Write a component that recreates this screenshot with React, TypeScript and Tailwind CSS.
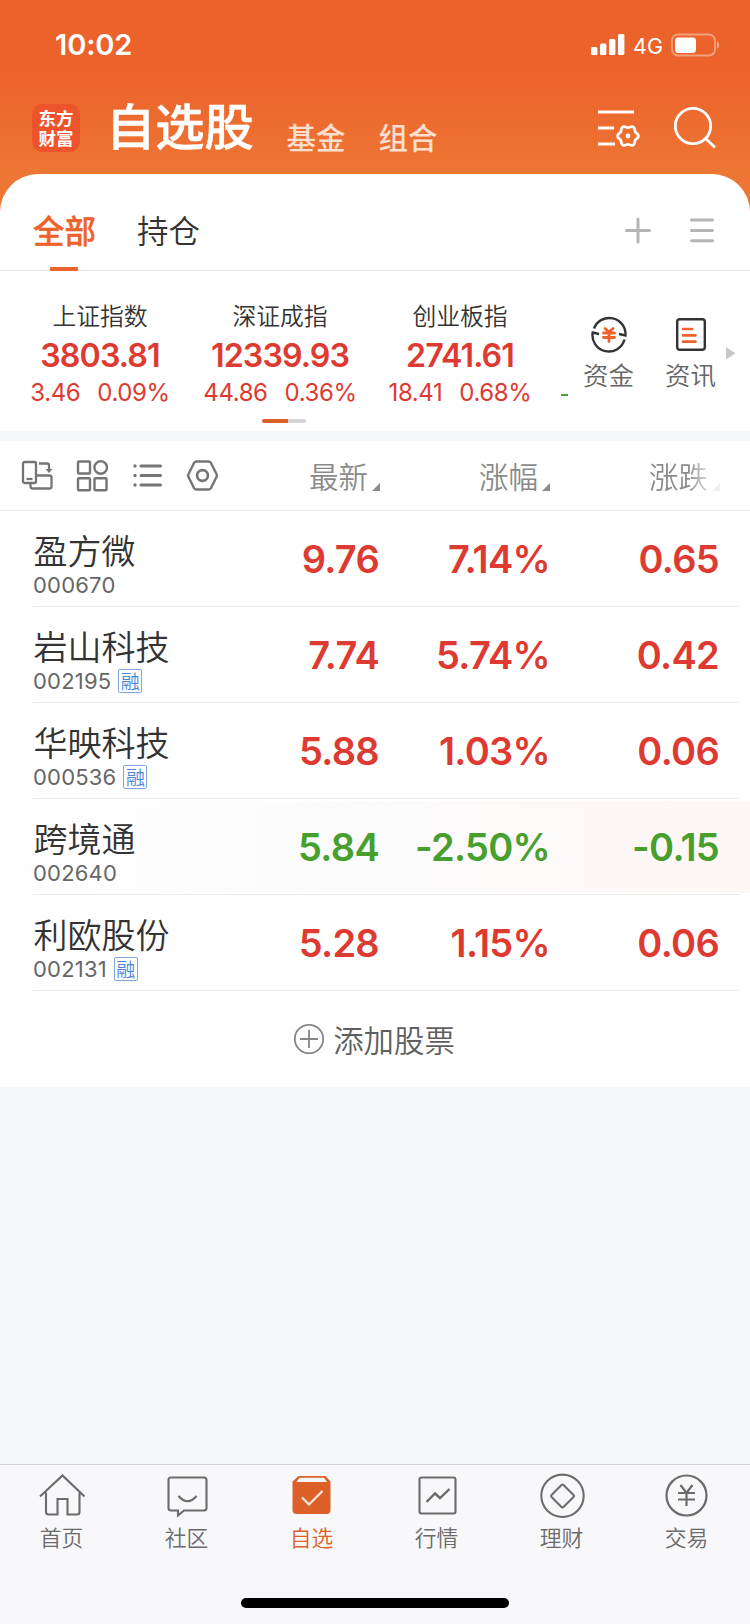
import type { ReactNode } from 'react'
import { clsx } from 'clsx'

const CJK = "font-['Noto_Sans_CJK_SC','Noto_Sans',sans-serif]"
const NUM = "font-['Inter','Noto_Sans_CJK_SC',sans-serif]"

interface IndexQuote {
  name: string
  value: string
  change: string
  percent: string
}

interface Stock {
  name: string
  code: string
  margin?: boolean
  price: string
  percent: string
  change: string
  down?: boolean
  highlighted?: boolean
}

const indices: IndexQuote[] = [
  { name: '上证指数', value: '3803.81', change: '3.46', percent: '0.09%' },
  { name: '深证成指', value: '12339.93', change: '44.86', percent: '0.36%' },
  { name: '创业板指', value: '2741.61', change: '18.41', percent: '0.68%' },
]

const stocks: Stock[] = [
  { name: '盈方微', code: '000670', price: '9.76', percent: '7.14%', change: '0.65' },
  { name: '岩山科技', code: '002195', margin: true, price: '7.74', percent: '5.74%', change: '0.42' },
  { name: '华映科技', code: '000536', margin: true, price: '5.88', percent: '1.03%', change: '0.06' },
  {
    name: '跨境通',
    code: '002640',
    price: '5.84',
    percent: '-2.50%',
    change: '-0.15',
    down: true,
    highlighted: true,
  },
  { name: '利欧股份', code: '002131', margin: true, price: '5.28', percent: '1.15%', change: '0.06' },
]

// Six-lobed gear outline, sampled from a polar curve around (cx, cy).
function gearPoints(cx: number, cy: number) {
  return Array.from({ length: 72 }, (_, i) => {
    const a = (i * Math.PI) / 36
    const r = 9.4 + Math.cos(6 * a)
    return `${(cx + r * Math.cos(a)).toFixed(2)},${(cy + r * Math.sin(a)).toFixed(2)}`
  }).join(' ')
}

function StatusBar() {
  return (
    <div className={clsx('flex h-[90px] items-center justify-between pl-[55px] pr-[30px] text-white', NUM)}>
      <span className="text-[29px] font-semibold leading-[30px] tracking-[-0.1px]">10:02</span>
      <div className="flex items-center">
        <svg width="34" height="22" viewBox="0 0 34 22" fill="currentColor">
          <rect x="0" y="13" width="6.4" height="8" rx="1.6" />
          <rect x="9" y="9.5" width="6.4" height="11.5" rx="1.6" />
          <rect x="18" y="5" width="6.4" height="16" rx="1.6" />
          <rect x="27" y="0" width="6.4" height="21" rx="1.6" />
        </svg>
        <span className="ml-2 mt-0.5 w-[30px] text-[21.5px] leading-6">4G</span>
        <svg className="ml-2" width="49" height="24" viewBox="0 0 49 24" fill="none">
          <rect x="1" y="1.5" width="43" height="21" rx="6" stroke="#fff" strokeOpacity="0.4" strokeWidth="1.8" />
          <rect x="4" y="4.5" width="21" height="15.5" rx="3.4" fill="#fff" />
          <path d="M46 8.5c2.8 1.2 2.8 6 0 7z" fill="#fff" fillOpacity="0.5" />
        </svg>
      </div>
    </div>
  )
}

function Header() {
  return (
    <header className={clsx('flex h-[84px] items-start pl-8 pr-[34px] text-white', CJK)}>
      <div className="mt-3.5 flex h-12 w-12 flex-col items-center justify-center rounded-[11px] bg-[#ee542b] text-[17.5px] font-bold leading-[20px]">
        <span>东方</span>
        <span>财富</span>
      </div>
      <h1 className="ml-[26px] mt-[-1px] w-[149px] whitespace-nowrap text-[49.3px] font-medium leading-[70px] [-webkit-text-stroke:0.5px_white]">
        自选股
      </h1>
      <span className="ml-[31.5px] mt-[27.5px] text-[29.5px] font-medium leading-9 text-[#fbdfcf]">基金</span>
      <span className="ml-[33px] mt-[27.5px] text-[29.5px] font-medium leading-9 text-[#fbdfcf]">组合</span>
      <svg className="ml-auto mt-4" width="44" height="44" viewBox="0 0 44 44" fill="none" stroke="#fff" strokeWidth="3">
        <path d="M0 6h36M0 22h16M0 38h17" />
        <polygon points={gearPoints(30, 30)} strokeWidth="2.7" strokeLinejoin="round" />
        <circle cx="30" cy="30" r="2.4" fill="#fff" stroke="none" />
      </svg>
      <svg className="ml-8 mt-4" width="42" height="44" viewBox="0 0 42 44" fill="none" stroke="#fff" strokeWidth="2.8">
        <circle cx="19" cy="20" r="17.7" />
        <path d="M31.5 32.5 41 41.5" />
      </svg>
    </header>
  )
}

function GroupTabs() {
  return (
    <div className={clsx('flex h-[97px] items-start border-b border-[#e3e3e3] pl-[33px] pr-9 text-[31.5px]', CJK)}>
      <div className="flex h-[97px] w-[63px] flex-col items-center">
        <span className="mt-[28px] font-medium leading-[54px] text-[#ee632b] [-webkit-text-stroke:0.4px_#ee632b]">
          全部
        </span>
        <span className="mr-0.5 mt-[11px] h-1 w-7 rounded-[1px] bg-[#ee632b]" />
      </div>
      <span className="ml-[41px] mt-[28px] font-[350] leading-[54px] text-[#333]">持仓</span>
      <div className="ml-auto mt-[42px] flex items-center gap-[39px]">
        <svg width="26" height="28" viewBox="0 0 26 28" stroke="#b5b5b5" strokeWidth="3" strokeLinecap="round">
          <path d="M1.5 14.5h23M13 3v23" />
        </svg>
        <svg width="24" height="28" viewBox="0 0 24 28" stroke="#b5b5b5" strokeWidth="3" strokeLinecap="round">
          <path d="M1.5 4h21M1.5 14.5h21M1.5 24.7h21" />
        </svg>
      </div>
    </div>
  )
}

function IndexCell({ quote }: { quote: IndexQuote }) {
  return (
    <div className="flex w-[180px] shrink-0 flex-col items-center">
      <span className={clsx('text-[23.8px] font-[350] leading-[34px] text-[#333]', CJK)}>{quote.name}</span>
      <span className={clsx('mt-1 text-[32.2px] font-semibold leading-10 tracking-[-0.9px] text-[#dd3b32]', NUM)}>
        {quote.value}
      </span>
      <span className={clsx('mt-0.5 flex gap-[17px] text-[24px] leading-[30px] tracking-[-0.4px] text-[#dd3b32]', NUM)}>
        <span>{quote.change}</span>
        <span>{quote.percent}</span>
      </span>
    </div>
  )
}

function Shortcut({ label, children }: { label: string; children: ReactNode }) {
  return (
    <div className="flex w-[52px] flex-col items-center">
      {children}
      <span className={clsx('mr-px mt-[3px] text-[25.5px] font-[350] leading-9 text-[#666]', CJK)}>{label}</span>
    </div>
  )
}

function IndexStrip() {
  return (
    <section className="h-[160px] bg-white">
      <div className="flex h-[148px] pl-[10px] pt-[27px]">
        {indices.map((quote) => (
          <IndexCell key={quote.name} quote={quote} />
        ))}
        {/* leading edge of the next quote, clipped by the shortcuts */}
        <span className="ml-[11px] mt-[96px] h-0.5 w-[7px] bg-[#4aa22c]" />
        <div className="ml-[15px] mt-[17px] flex gap-[30px]">
          <Shortcut label="资金">
            <svg width="38" height="38" viewBox="0 0 38 38" fill="none" stroke="#333" strokeWidth="2.4">
              <path d="M4 13.5A16.3 16.3 0 0 1 35.5 20.5L29 19" />
              <path d="M34.5 24.5A16.3 16.3 0 0 1 2.7 17.5L9 19" />
              <g stroke="#ee632b" strokeWidth="2.8" strokeLinecap="round">
                <path d="M15 13.5 19 17l4-3.5M13.5 18h11M13.5 22.5h11M19 17v9.5" />
              </g>
            </svg>
          </Shortcut>
          <Shortcut label="资讯">
            <svg width="38" height="38" viewBox="0 0 38 38" fill="none">
              <rect x="5.2" y="4.2" width="27.6" height="30.6" rx="2.5" stroke="#333" strokeWidth="2.4" />
              <path d="M11 14h9M11 20.3h12.5M11 26.7h12.5" stroke="#ee632b" strokeWidth="2.7" strokeLinecap="round" />
            </svg>
          </Shortcut>
        </div>
        <svg className="ml-[9px] mt-[49px]" width="10" height="13" viewBox="0 0 10 13" fill="#c8c8c8">
          <path d="M0 0 9.5 6.3 0 12.6z" />
        </svg>
      </div>
      <div className="ml-[262px] flex h-1 w-11 overflow-hidden rounded-[2px] bg-[#d5d5da]">
        <span className="w-[26px] bg-[#dc6027]" />
      </div>
    </section>
  )
}

function SortLabel({ label, faded }: { label: string; faded?: boolean }) {
  return (
    <div className="flex w-[160px] items-center justify-end text-[29.5px] font-[350] text-[#8a8a8a]">
      <span
        className={clsx(
          'mt-[-2px] leading-10',
          faded && 'bg-[linear-gradient(90deg,#8a8a8a_65%,#dcdcdc)] bg-clip-text text-transparent',
        )}
      >
        {label}
      </span>
      <svg
        className={clsx('ml-1 mt-[22px]', faded ? 'text-[#efefef]' : 'text-[#8b8b90]')}
        width="8"
        height="8"
        viewBox="0 0 8 8"
        fill="currentColor"
      >
        <path d="M8 0v8H0z" />
      </svg>
    </div>
  )
}

function TableHeader() {
  return (
    <div className={clsx('flex h-[70px] items-center border-b border-[#ebebeb] bg-white pl-5 pr-[30px]', CJK)}>
      <div className="flex items-center gap-[22px] text-[#757575]">
        <svg width="33" height="33" viewBox="0 0 33 33" fill="none" stroke="currentColor" strokeWidth="2.3">
          <rect x="3" y="3" width="13" height="21" rx="1.5" />
          <path d="M6.5 20h6" />
          <path d="M10.5 24.5v2.5q0 2.5 2 2.5h17q2 0 2-2V18.5q0-2-2-2H16.5" />
          <path d="M19 4.5h8q2 0 2 2V12" />
          <path d="M25.5 10h7L29 14z" fill="currentColor" stroke="none" />
        </svg>
        <svg width="33" height="33" viewBox="0 0 33 33" fill="none" stroke="currentColor" strokeWidth="2.4">
          <rect x="3" y="2.5" width="12" height="12" rx="1" />
          <circle cx="25.7" cy="8.5" r="6.3" />
          <rect x="3" y="19.2" width="12" height="12" rx="1" />
          <rect x="19.5" y="19.2" width="12" height="12" rx="1" />
        </svg>
        <svg width="33" height="33" viewBox="0 0 33 33" fill="none" stroke="currentColor" strokeWidth="3" strokeLinecap="round">
          <path d="M11 7h19.5M11 16.5h19.5M11 26h19.5" />
          <path d="M5 7h.01M5 16.5h.01M5 26h.01" strokeWidth="3.4" />
        </svg>
        <svg width="33" height="33" viewBox="0 0 33 33" fill="none" stroke="currentColor" strokeWidth="2.4">
          <path d="M11.5 2.5h12q1.5 0 2.3 1.2l5.7 11.3q.8 1.5 0 3l-5.7 11.3q-.8 1.2-2.3 1.2h-12q-1.5 0-2.3-1.2l-5.7-11.3q-.8-1.5 0-3l5.7-11.3q.8-1.2 2.3-1.2z" />
          <circle cx="17.5" cy="16.5" r="5.4" strokeWidth="2.7" />
        </svg>
      </div>
      <div className="ml-auto flex gap-[10px]">
        <SortLabel label="最新" />
        <SortLabel label="涨幅" />
        <SortLabel label="涨跌" faded />
      </div>
    </div>
  )
}

function StockRow({ stock }: { stock: Stock }) {
  return (
    <li
      className={clsx(
        'h-24 pl-[33px] pr-[10px]',
        stock.highlighted &&
          'bg-[linear-gradient(90deg,#ffffff,#fcfbfc_50%,#fdf9f8_75%,#fef7f6)] bg-[length:100%_92px] bg-[position:0_2px] bg-no-repeat',
      )}
    >
      <div className="flex h-24 border-b border-[#ebebeb] pr-5">
        <div className="flex w-[177px] shrink-0 flex-col pt-[19px]">
          <span className={clsx('ml-[0.5px] text-[34px] font-[350] leading-10 text-[#333]', CJK)}>{stock.name}</span>
          <div className="mt-[3px] flex h-6 items-center">
            <span className={clsx('text-[22px] leading-6 tracking-[0.2px] text-[#666]', NUM)}>{stock.code}</span>
            {stock.margin && (
              <span
                className={clsx(
                  'ml-[7px] flex h-6 w-6 items-center justify-center rounded-[2px] border border-[#7fa6e0] text-[19px] font-[350] leading-5 text-[#4a86d8]',
                  CJK,
                )}
              >
                融
              </span>
            )}
          </div>
        </div>
        <div
          className={clsx(
            'flex text-right text-[38px] font-semibold leading-[96px] tracking-[-0.7px]',
            stock.down ? 'text-[#479f2d]' : 'text-[#dd3b32]',
            NUM,
          )}
        >
          <span className="w-[169px]">{stock.price}</span>
          <span className="w-[171px]">{stock.percent}</span>
          <span className="w-[169px]">{stock.change}</span>
        </div>
      </div>
    </li>
  )
}

function AddStock() {
  return (
    <button
      type="button"
      className={clsx('flex h-24 w-full items-center justify-center bg-white pr-0.5', CJK)}
    >
      <svg width="32" height="32" viewBox="0 0 32 32" fill="none" stroke="#85858c" strokeWidth="1.8">
        <circle cx="16" cy="16" r="14.2" />
        <path d="M7 16h18M16 7v18" />
      </svg>
      <span className="ml-2 mt-[-1px] text-[30.4px] font-[350] leading-10 text-[#5f5f5f]">添加股票</span>
    </button>
  )
}

function NavItem({ label, active, children }: { label: string; active?: boolean; children: ReactNode }) {
  return (
    <a className={clsx('flex w-[125px] flex-col items-center pt-2', active ? 'text-[#dc6027]' : 'text-[#6b6b6b]')}>
      <svg width="46" height="46" viewBox="0 0 46 46" fill="none" stroke="currentColor" strokeWidth="2.1">
        {children}
      </svg>
      <span className={clsx('mt-0.5 text-[21.8px] font-[350] leading-8', CJK)}>{label}</span>
    </a>
  )
}

function BottomNav() {
  return (
    <nav className="mt-auto h-[160px] border-t border-[#d2d3d8] bg-[#f8f8fa]">
      <div className="-ml-px flex h-[133px]">
        <NavItem label="首页">
          <path d="M1 23.5 23.5 2.5l22 21M7 19.5V39q0 2.5 2.5 2.5H18.5V26h10v15.5h9.5q2.5 0 2.5-2.5V19.5" />
        </NavItem>
        <NavItem label="社区">
          <path d="M7 4.5h33q2.5 0 2.5 2.5v28q0 2.5-2.5 2.5H20l-6 5v-5h-7q-2.5 0-2.5-2.5V7q0-2.5 2.5-2.5z" />
          <path d="M14.5 23q9 10.5 18 0" />
        </NavItem>
        <NavItem label="自选" active>
          <path d="M9.5 3h27l5 5.5V37q0 4-4 4H7.500q-4 0-4-4V8.5z" fill="currentColor" stroke="none" />
          <path d="M10.5 4.8h24.5l3 4.2H7.5z" fill="#f8f8fa" stroke="none" />
          <path d="m13 24.5 7 7L33.5 18" stroke="#fbe9df" strokeWidth="2.2" />
        </NavItem>
        <NavItem label="行情">
          <rect x="5.5" y="4.5" width="36" height="36" rx="2" />
          <path d="m12.5 29 8.5-8.5 5 4.5L35.5 16" strokeWidth="2.4" />
        </NavItem>
        <NavItem label="理财">
          <circle cx="23.5" cy="22.8" r="21.2" />
          <path d="M22.5 12q1-1 2 0l10 10q1 1 0 2l-10 10q-1 1-2 0l-10-10q-1-1 0-2z" />
        </NavItem>
        <NavItem label="交易">
          <circle cx="22.5" cy="22.5" r="20" strokeWidth="2.2" />
          <path d="m16.5 12 6 8 6-8M14 20h17M14 26.5h17M22.5 20v13" strokeWidth="2.2" />
        </NavItem>
      </div>
      <div className="mx-auto h-2.5 w-[268px] rounded-full bg-black" />
    </nav>
  )
}

export default function App() {
  return (
    <div className="flex h-[1624px] w-[750px] flex-col overflow-hidden bg-[#f6f7f9]">
      <div className="bg-[linear-gradient(180deg,#ec622b_0,#ec622b_72px,#ed7634_172px)]">
        <StatusBar />
        <Header />
        <main className="rounded-t-[38px] bg-white">
          <GroupTabs />
          <IndexStrip />
        </main>
      </div>
      <section className="mt-2.5">
        <TableHeader />
        <ul className="bg-white">
          {stocks.map((stock) => (
            <StockRow key={stock.code} stock={stock} />
          ))}
        </ul>
        <AddStock />
      </section>
      <BottomNav />
    </div>
  )
}
